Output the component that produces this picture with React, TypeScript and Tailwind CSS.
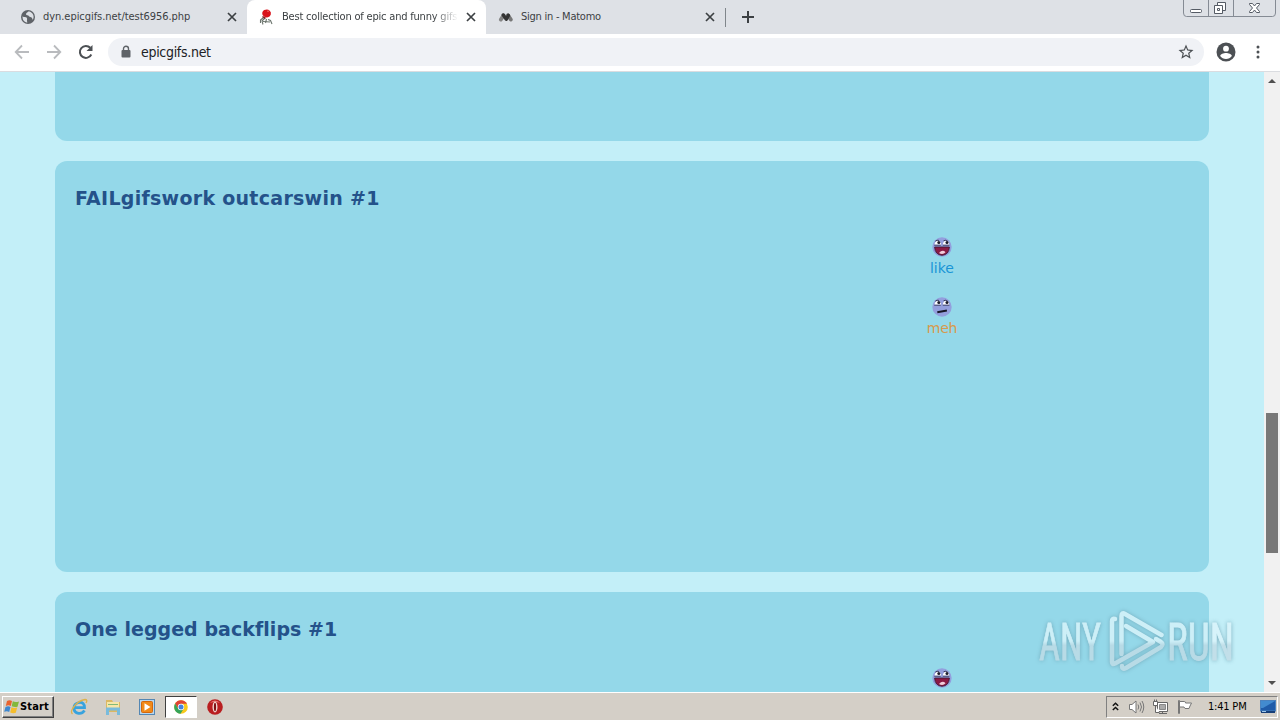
import { ReactNode } from "react";

const UI = "font-['DejaVu_Sans_Condensed','DejaVu_Sans',sans-serif] [font-stretch:condensed]";

function Close() {
  return (
    <svg width="10" height="10" viewBox="0 0 10 10" className="block shrink-0" stroke="#3c4043" strokeWidth="1.7">
      <path d="M1 1l8 8M9 1l-8 8" />
    </svg>
  );
}

function Globe() {
  return (
    <svg width="16" height="16" viewBox="0 0 16 16">
      <circle cx="8" cy="8" r="7" fill="#5f6368" />
      <path d="M2.600 7.200C4 8.600 6.400 7.400 7 9.200c.5 1.400-.6 1.800.4 4.400-2.800-.2-5.200-2.600-4.800-6.400zM8.200 2.500c-.6 1.500-2.400 1.200-2.200 2.800.2 1.400 2.400.6 3 2 .5 1.200 2 .4 2.800 1.400.6.8.6 1.600 1 2 1.600-2.600.8-6.400-2.200-7.800-.8-.3-1.600-.5-2.400-.4z" fill="#dee1e6" />
    </svg>
  );
}

function RedFigure() {
  return (
    <svg width="16" height="16" viewBox="0 0 16 16">
      <path d="M4.500 8.500L1.500 11v3M6 9l-3 3 1 3.500M7.500 10L6.500 14M9 10.500l2.500 1 1.500 3.500M4 12.500l7 .5" stroke="#6c756e" strokeWidth="1.100" fill="none" />
      <path d="M3.200 4q.5-3 3.300-3.300 2.500-.6 4 .8 2 1.500 1.300 4-.5 2.300-2.800 2.800-2.500.4-4-.8Q3 6 3.200 4z" fill="#d9141c" />
      <path d="M3.500 7.500l3 1.800" stroke="#7a2020" strokeWidth="1.400" />
      <path d="M8 2.200h2" stroke="#f06a66" />
    </svg>
  );
}

function Matomo() {
  return (
    <svg width="16" height="16" viewBox="0 0 16 16">
      <path d="M2.800 10.600l2.800-4.200" stroke="#858585" strokeWidth="3.800" strokeLinecap="round" />
      <path d="M12.800 10.600L10 6.200" stroke="#777" strokeWidth="3.800" strokeLinecap="round" />
      <path d="M5.300 6l3 4.300L10.400 6.400" stroke="#333" strokeWidth="3.400" strokeLinecap="round" strokeLinejoin="round" fill="none" />
    </svg>
  );
}

function Tab({ icon, title, textClass, active }: { icon: ReactNode; title: string; textClass: string; active?: boolean }) {
  return (
    <div className={`flex h-[34px] w-[239px] shrink-0 items-center pr-[10px] pl-[12px] ${active ? "rounded-t-[8px] bg-white" : ""}`}>
      <span className="mr-[7px] shrink-0">{icon}</span>
      <span
        className={`w-[176px] shrink-0 overflow-hidden whitespace-nowrap text-[11px] leading-[16px] text-[#3c4043] ${textClass} ${
          active ? "[mask-image:linear-gradient(to_right,black_86%,transparent)]" : ""
        }`}
      >
        {title}
      </span>
      <span className="ml-auto"><Close /></span>
    </div>
  );
}

function WindowButtons() {
  return (
    <svg width="94" height="18" viewBox="0 0 94 18" className="shrink-0" fill="none">
      <path d="M.5 0v13q0 3.500 3 3.500h86q3 0 3-3.500V0M25.500 0v16M50.500 0v16" stroke="#858b94" />
      <rect x="7.500" y="9.500" width="11" height="3" rx="1" fill="#fff" stroke="#555b65" />
      <path d="M34.500 2.500h8v8h-8z" fill="#fff" stroke="#555b65" />
      <path d="M31.500 5.500h8v8h-8z" fill="#fff" stroke="#555b65" />
      <path d="M34.500 8.500h2v2h-2z" stroke="#555b65" />
      <path d="M66.500 3.500h3l2 2.500 2-2.500h3v1L73.500 8l3 3.500v1h-3l-2-2.500-2 2.500h-3v-1l3-3.500-3-3.500z" fill="#fff" stroke="#555b65" />
    </svg>
  );
}

function TabStrip() {
  return (
    <div className="flex h-[34px] items-start bg-[#dee1e6] pl-[8px]">
      <Tab icon={<Globe />} title="dyn.epicgifs.net/test6956.php" textClass="tracking-[-0.05px]" />
      <Tab icon={<RedFigure />} title="Best collection of epic and funny gifs" textClass="tracking-[-0.2px]" active />
      <Tab icon={<Matomo />} title="Sign in - Matomo" textClass="tracking-[-0.25px]" />
      <div className="mt-[8px] h-[19px] w-px bg-[#80868b]" />
      <svg width="12" height="12" viewBox="0 0 12 12" className="mt-[11px] ml-[16px]" stroke="#3c4043" strokeWidth="2">
        <path d="M6 0v12M0 6h12" />
      </svg>
      <div className="mr-[3px] ml-auto"><WindowButtons /></div>
    </div>
  );
}

function Toolbar() {
  return (
    <div className="flex h-[38px] items-center border-b border-[#dadce0] bg-white pr-[13px] pb-[2px] pl-[14px]">
      <svg width="16" height="16" viewBox="0 0 16 16" fill="none" stroke="#b9bbbe" strokeWidth="1.800">
        <path d="M15 8H2M8 1.500L1.700 8 8 14.500" />
      </svg>
      <svg width="16" height="16" viewBox="0 0 16 16" fill="none" stroke="#b9bbbe" strokeWidth="1.800" className="ml-[16px]">
        <path d="M1 8h13M8 1.500L14.300 8 8 14.500" />
      </svg>
      <svg width="16" height="16" viewBox="0 0 16 16" fill="none" className="ml-[16px]">
        <path d="M13.300 10.500A6 6 0 1 1 12.300 3.800" stroke="#4c5054" strokeWidth="2" />
        <path d="M14.500 1v6h-6z" fill="#4c5054" />
      </svg>
      <div className="ml-[14px] flex h-[28px] w-[1096px] items-center rounded-full bg-[#f0f2f6] pr-[9px] pl-[13px]">
        <svg width="10" height="14" viewBox="0 0 10 14" fill="none">
          <path d="M2.500 6V3.700a2.500 2.500 0 0 1 5 0V6" stroke="#5f6368" strokeWidth="1.400" />
          <rect x=".5" y="5" width="9" height="7.500" rx="1" fill="#5f6368" />
        </svg>
        <span className="ml-[10px] text-[14px] leading-[18px] tracking-[-0.3px] text-[#202124]">epicgifs.net</span>
        <svg width="18" height="18" viewBox="0 0 24 24" className="ml-auto" fill="#4c5054">
          <path d="M22 9.240l-7.190-.62L12 2 9.190 8.630 2 9.240l5.460 4.730L5.820 21 12 17.270 18.180 21l-1.630-7.030L22 9.240zM12 15.400l-3.760 2.270 1-4.280-3.320-2.880 4.380-.38L12 6.100l1.710 4.040 4.380.38-3.320 2.880 1 4.280L12 15.400z" />
        </svg>
      </div>
      <svg width="20" height="20" viewBox="0 0 20 20" className="ml-[12px]">
        <circle cx="10" cy="10" r="9.500" fill="#4c5054" />
        <circle cx="10" cy="6.700" r="2.900" fill="#fff" />
        <path d="M4.200 14c0-2 3.500-3 5.800-3s5.800 1 5.800 3c-1.300 1.900-3.400 3-5.800 3s-4.500-1.100-5.800-3z" fill="#fff" />
      </svg>
      <svg width="4" height="14" viewBox="0 0 4 14" className="mr-[7px] ml-auto" fill="#4c5054">
        <circle cx="2" cy="2" r="1.500" /><circle cx="2" cy="7" r="1.500" /><circle cx="2" cy="12" r="1.500" />
      </svg>
    </div>
  );
}

function Face({ meh }: { meh?: boolean }) {
  return (
    <svg width="20" height="20" viewBox="0 0 20 20" className="block">
      <circle cx="10" cy="10" r="9.700" fill="#939fdd" />
      <path d="M2.500 7.800q.5-4 3.500-4 2.800.2 3 4zM10.800 7.800q.5-4 3.300-4 2.900.2 3.200 4z" fill="#fff" />
      <path d="M2.200 8.200h6.600M10.800 8.200h6.600" stroke="#3a3c5c" strokeWidth=".9" />
      <path d="M3.300 4.200q1.700-1.500 3.700-.8M11.600 3.700q2.200-1.200 4.200.6" stroke="#30324e" strokeWidth=".9" fill="none" />
      <circle cx="6.800" cy="5.600" r="1.500" fill="#1d1d2c" />
      <circle cx="15" cy="5.600" r="1.500" fill="#1d1d2c" />
      {meh ? (
        <path d="M5.300 15.200l9.600-1.700" stroke="#171726" strokeWidth="2" />
      ) : (
        <>
          <path d="M2.600 10h14.800q-.4 7.800-7.400 8.300-7-.5-7.400-8.300z" fill="#8a1a44" stroke="#35152f" strokeWidth=".8" />
          <path d="M7 16q3.500-4 6.500-.8-2.600 3-6.500.8z" fill="#f2ccda" />
        </>
      )}
    </svg>
  );
}

function CardTitle({ children, className }: { children: string; className: string }) {
  return (
    <h2 className={`h-[26px] text-[19px] leading-[26px] font-bold whitespace-nowrap text-[#24528a] ${className}`}>
      {children}
    </h2>
  );
}

function GifCard() {
  return (
    <section className="h-[411px] shrink-0 rounded-[12px] bg-[#94d8e9] pt-[24px] pl-[20px]">
      <CardTitle className="tracking-[0.28px]">FAILgifswork outcarswin #1</CardTitle>
      <div className="mt-[26px] ml-[837px] flex w-[60px] flex-col items-center text-[14px] leading-[20px]">
        <Face />
        <span className="mt-[1px] text-[#1995d6]">like</span>
        <span className="mt-[19px]"><Face meh /></span>
        <span className="mt-[1px] tracking-[-0.2px] text-[#d79a4c]">meh</span>
      </div>
    </section>
  );
}

function NextCard() {
  return (
    <section className="h-[100px] shrink-0 rounded-t-[12px] bg-[#94d8e9] pt-[24px] pl-[20px]">
      <CardTitle className="tracking-[0.05px]">One legged backflips #1</CardTitle>
      <div className="mt-[26px] ml-[857px]"><Face /></div>
    </section>
  );
}

function ScrollBar() {
  return (
    <div className="flex w-[16px] shrink-0 flex-col items-center bg-[#f1f1f1]">
      <svg width="16" height="17" viewBox="0 0 16 17" fill="#505050"><path d="M4 11h8L8 7z" /></svg>
      <div className="mt-[324px] h-[140px] w-[12px] bg-[#787878]" />
      <svg width="16" height="17" viewBox="0 0 16 17" fill="#505050" className="mt-auto"><path d="M4 6h8l-4 4z" /></svg>
    </div>
  );
}

function Watermark() {
  return (
    <svg width="200" height="72" viewBox="0 0 200 72" className="absolute top-[606px] left-[1036px] overflow-visible opacity-80 drop-shadow-[0_0_2px_#6b9eb0]">
      <defs>
        <linearGradient id="wm" x1="0" y1="0" x2="0" y2="70" gradientUnits="userSpaceOnUse">
          <stop offset=".5" stopColor="#dcf5fb" />
          <stop offset=".56" stopColor="#c2dce6" />
        </linearGradient>
      </defs>
      <g fill="url(#wm)" stroke="url(#wm)" strokeWidth=".8" fontFamily="Roboto, sans-serif" fontSize="51">
        <text x="3" y="53.500" textLength="62" lengthAdjust="spacingAndGlyphs">ANY</text>
        <text x="131" y="53.500" textLength="67" lengthAdjust="spacingAndGlyphs">RUN</text>
      </g>
      <g fill="none" stroke="url(#wm)" strokeWidth="4.500" strokeLinejoin="round" strokeLinecap="round">
        <path d="M85.500 48V10q0-4 3.500-2L125.500 29" />
        <path d="M79 13q-3-1-3 2v41q0 3 3 1.500L117 36 90 20" />
        <path d="M86 60q0 4 4 2l35-21q3-3 0-5l-5-3" />
      </g>
    </svg>
  );
}

function QuickLaunch() {
  return (
    <div className="flex items-center">
      <svg width="18" height="18" viewBox="0 0 18 18" className="ml-[16px]" fill="none">
        <path d="M14.500 12.500Q12 16 8.500 15.300 4 14.500 4 10t5-5.500Q14.500 4 14.500 9.700H5" stroke="#38a3de" strokeWidth="2.800" />
        <path d="M2.500 16C-1 13 7 2.500 15 1.500q3 0 1 3.500" stroke="#ddb24b" strokeWidth="1.300" />
      </svg>
      <svg width="18" height="18" viewBox="0 0 18 18" className="ml-[16px]">
        <path d="M2 2h6l1 2h7v10H2z" fill="#dcb863" />
        <path d="M3 4h12v7H3z" fill="#f6e6a7" />
        <path d="M4 6h10v1H4z" fill="#82b979" />
        <path d="M2 9.500h14V17h-3v-4.500H5V17H2z" fill="#79bbdc" />
      </svg>
      <svg width="16" height="16" viewBox="0 0 16 16" className="ml-[17px]">
        <rect x=".5" y=".5" width="15" height="15" fill="#b9d7ee" stroke="#5487b3" />
        <rect x="2.500" y="2.500" width="11" height="11" rx="1" fill="#f18a18" stroke="#d3670d" />
        <path d="M5.500 4.200v7.600l6-3.800z" fill="#fff" />
      </svg>
      <div className="ml-[10px] flex h-[22px] w-[32px] items-center justify-center border border-t-[#404040] border-r-white border-b-white border-l-[#404040] bg-white">
        <svg width="14" height="14" viewBox="0 0 14 14">
          <circle cx="7" cy="7" r="6.800" fill="#f8c91c" />
          <path d="M1.100 3.600A6.800 6.800 0 0 1 13 3.700H7L4.200 8.700z" fill="#df4335" />
          <path d="M1.100 3.600A6.800 6.800 0 0 0 6.500 13.800l3.300-5.200L7 10 4.200 8.700z" fill="#35a45a" />
          <circle cx="7" cy="7" r="3.200" fill="#fff" />
          <circle cx="7" cy="7" r="2.500" fill="#4382df" />
        </svg>
      </div>
      <svg width="16" height="16" viewBox="0 0 16 16" className="ml-[10px]">
        <circle cx="8" cy="8" r="7.800" fill="#b91e20" />
        <path d="M3 4a6.200 6.200 0 0 1 10 0q-5-2-10 0z" fill="#e57570" />
        <ellipse cx="8" cy="8" rx="2.500" ry="5.400" fill="#f2d9d3" />
        <ellipse cx="8" cy="8" rx="1.100" ry="4.200" fill="#7e1113" />
      </svg>
    </div>
  );
}

function Tray() {
  return (
    <div className="mr-[2px] ml-auto flex h-[22px] w-[172px] items-center border border-t-[#808080] border-r-white border-b-white border-l-[#808080]">
      <svg width="7" height="9" viewBox="0 0 7 9" className="mb-[2px] ml-[5px]" fill="none" stroke="#111" strokeWidth="1.500">
        <path d="M.8 3.800L3.500 1.300 6.200 3.800M.8 8L3.500 5.500 6.200 8" />
      </svg>
      <svg width="17" height="16" viewBox="0 0 17 16" className="ml-[9px]" fill="none" stroke="#777">
        <path d="M1.500 5.500h2.500L8 2v12l-4-3.500H1.500z" fill="#fff" />
        <path d="M10 5.500q1.500 2.500 0 5M12 3.500q3 4.500 0 9M14 2q3.500 6 0 12" />
      </svg>
      <svg width="17" height="16" viewBox="0 0 17 16" className="ml-[7px]" fill="none" stroke="#666">
        <path d="M5.500 3.500h10v9h-10z" fill="#fff" />
        <path d="M7.500 5.500h6v5h-6z" fill="#aaa" stroke="#888" />
        <path d="M1.500 2.500h4v4h-4zM2.500.5v2M4.500.5v2M3.500 6.500v7h4M7 14.500h8M10.500 12v2" fill="#fff" />
      </svg>
      <svg width="16" height="16" viewBox="0 0 16 16" className="ml-[8px]" fill="#fff" stroke="#777">
        <path d="M1.500 1.500h1v13h-1z" />
        <path d="M2.500 2.500h5q1 0 1 1.500h6L13 7l-1 2.500H8l-1-1.500H2.500z" />
      </svg>
      <span className="ml-[15px] w-[42px] text-[11px] tracking-[-0.2px] whitespace-nowrap text-black">1:41 PM</span>
      <svg width="16" height="14" viewBox="0 0 16 14" className="mr-[1px] ml-auto">
        <rect x=".5" y=".5" width="15" height="10.500" fill="#205ca9" stroke="#4c82bd" />
        <path d="M1 1h14L3 8H1z" fill="#438bcf" />
        <path d="M1 11h14v2H1z" fill="#173f78" />
        <path d="M2 11h4v1H2z" fill="#9fc9eb" />
      </svg>
    </div>
  );
}

function TaskBar() {
  return (
    <div className="flex h-[28px] items-center border-t border-white bg-[#d4cfc7] pt-px">
      <div className="ml-[2px] flex h-[22px] w-[52px] items-center border border-t-white border-r-[#404040] border-b-[#404040] border-l-white pl-px shadow-[inset_-1px_-1px_0_#808080]">
        <svg width="16" height="16" viewBox="0 0 16 16" className="shrink-0">
          <path d="M3 2q2.500-1.500 5 0L6.800 7q-2.300-1.500-5 0z" fill="#e9632e" />
          <path d="M8.800 2.300q2.500 1.500 6.200.2l-1.500 5.200q-2.700 1-5.800-.4z" fill="#83b83b" />
          <path d="M1.500 8q2.700-1.300 5 0L5.200 13Q3 11.500.2 12.800z" fill="#3d87cf" />
          <path d="M7.500 8.300q2.500 1.400 5.700.3l-1.400 5.200q-2.700 1-5.600-.4z" fill="#f5bd2c" />
        </svg>
        <span className="text-[11px] font-bold tracking-[0.15px] text-black">Start</span>
      </div>
      <QuickLaunch />
      <Tray />
    </div>
  );
}

export default function App() {
  return (
    <div className={`relative flex h-[720px] w-[1280px] flex-col overflow-hidden ${UI}`}>
      <TabStrip />
      <Toolbar />
      <div className="flex min-h-0 flex-1">
        <main className="flex min-w-0 flex-1 flex-col gap-[20px] bg-[#c3eff8] px-[55px] font-['DejaVu_Sans',sans-serif] [font-stretch:normal]">
          <div className="h-[69px] shrink-0 rounded-b-[12px] bg-[#94d8e9]" />
          <GifCard />
          <NextCard />
        </main>
        <ScrollBar />
      </div>
      <TaskBar />
      <Watermark />
    </div>
  );
}
